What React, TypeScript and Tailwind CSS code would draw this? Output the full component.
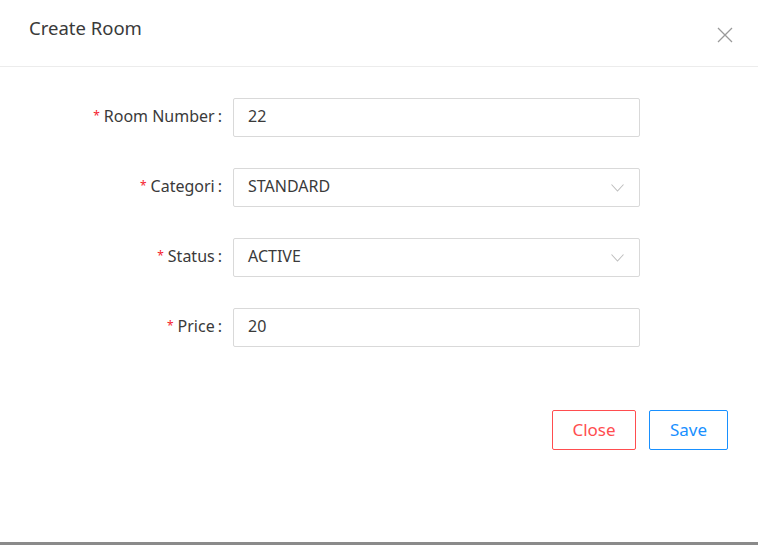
import React from 'react';

const Field = ({ label, value, select }: { label: string; value: string; select?: boolean }) => (
    <div className="flex items-center h-[39px]">
        <label className="w-[233px] h-full flex justify-end items-center pr-[11px] pb-[4px] text-[16px] text-[#3a3a3a]">
            <span className="text-[#f5222d] text-[12px] mr-[4px] leading-none">*</span>
            {label}
            <span className="ml-[3px]">:</span>
        </label>
        <div className="relative w-[407px] h-[39px] border border-[#d9d9d9] rounded-[2px] flex items-center pl-[14px] pb-[4px] text-[16px] text-[#3a3a3a]">
            {value}
            {select && (
                <svg className="absolute right-[15px] top-[15px]" width="13" height="8" viewBox="0 0 13 8" fill="none">
                    <path d="M0.5 0.5 L6.5 7 L12.5 0.5" stroke="#bfbfbf" strokeWidth="1.1" />
                </svg>
            )}
        </div>
    </div>
);

export default function App() {
    return (
        <div className="w-[758px] h-[545px] bg-white flex flex-col border-b-[3px] border-[#8a8a8a]" style={{ fontFamily: '"Noto Sans", sans-serif' }}>
            <div className="h-[67px] flex items-start justify-between border-b border-[#ececec] px-[29px]">
                <h1 className="mt-[15px] text-[18.5px] text-[#3a3a3a] leading-[26px]">Create Room</h1>
                <button className="mt-[27px] mr-[-4px] text-[#999]">
                    <svg width="16" height="16" viewBox="0 0 16 16" fill="none">
                        <path d="M1 1 L15 15 M15 1 L1 15" stroke="#9a9a9a" strokeWidth="1.3" />
                    </svg>
                </button>
            </div>
            <div className="flex flex-col gap-[31px] pt-[31px]">
                <Field label="Room Number" value="22" />
                <Field label="Categori" value="STANDARD" select />
                <Field label="Status" value="ACTIVE" select />
                <Field label="Price" value="20" />
            </div>
            <div className="flex justify-end gap-[13px] pr-[30px] mt-[63px]">
                <button className="w-[84px] h-[40px] border border-[#ff4d4f] rounded-[2px] text-[#ff4d4f] text-[17px]">Close</button>
                <button className="w-[79px] h-[40px] border border-[#1890ff] rounded-[2px] text-[#1890ff] text-[17px]">Save</button>
            </div>
        </div>
    );
}
